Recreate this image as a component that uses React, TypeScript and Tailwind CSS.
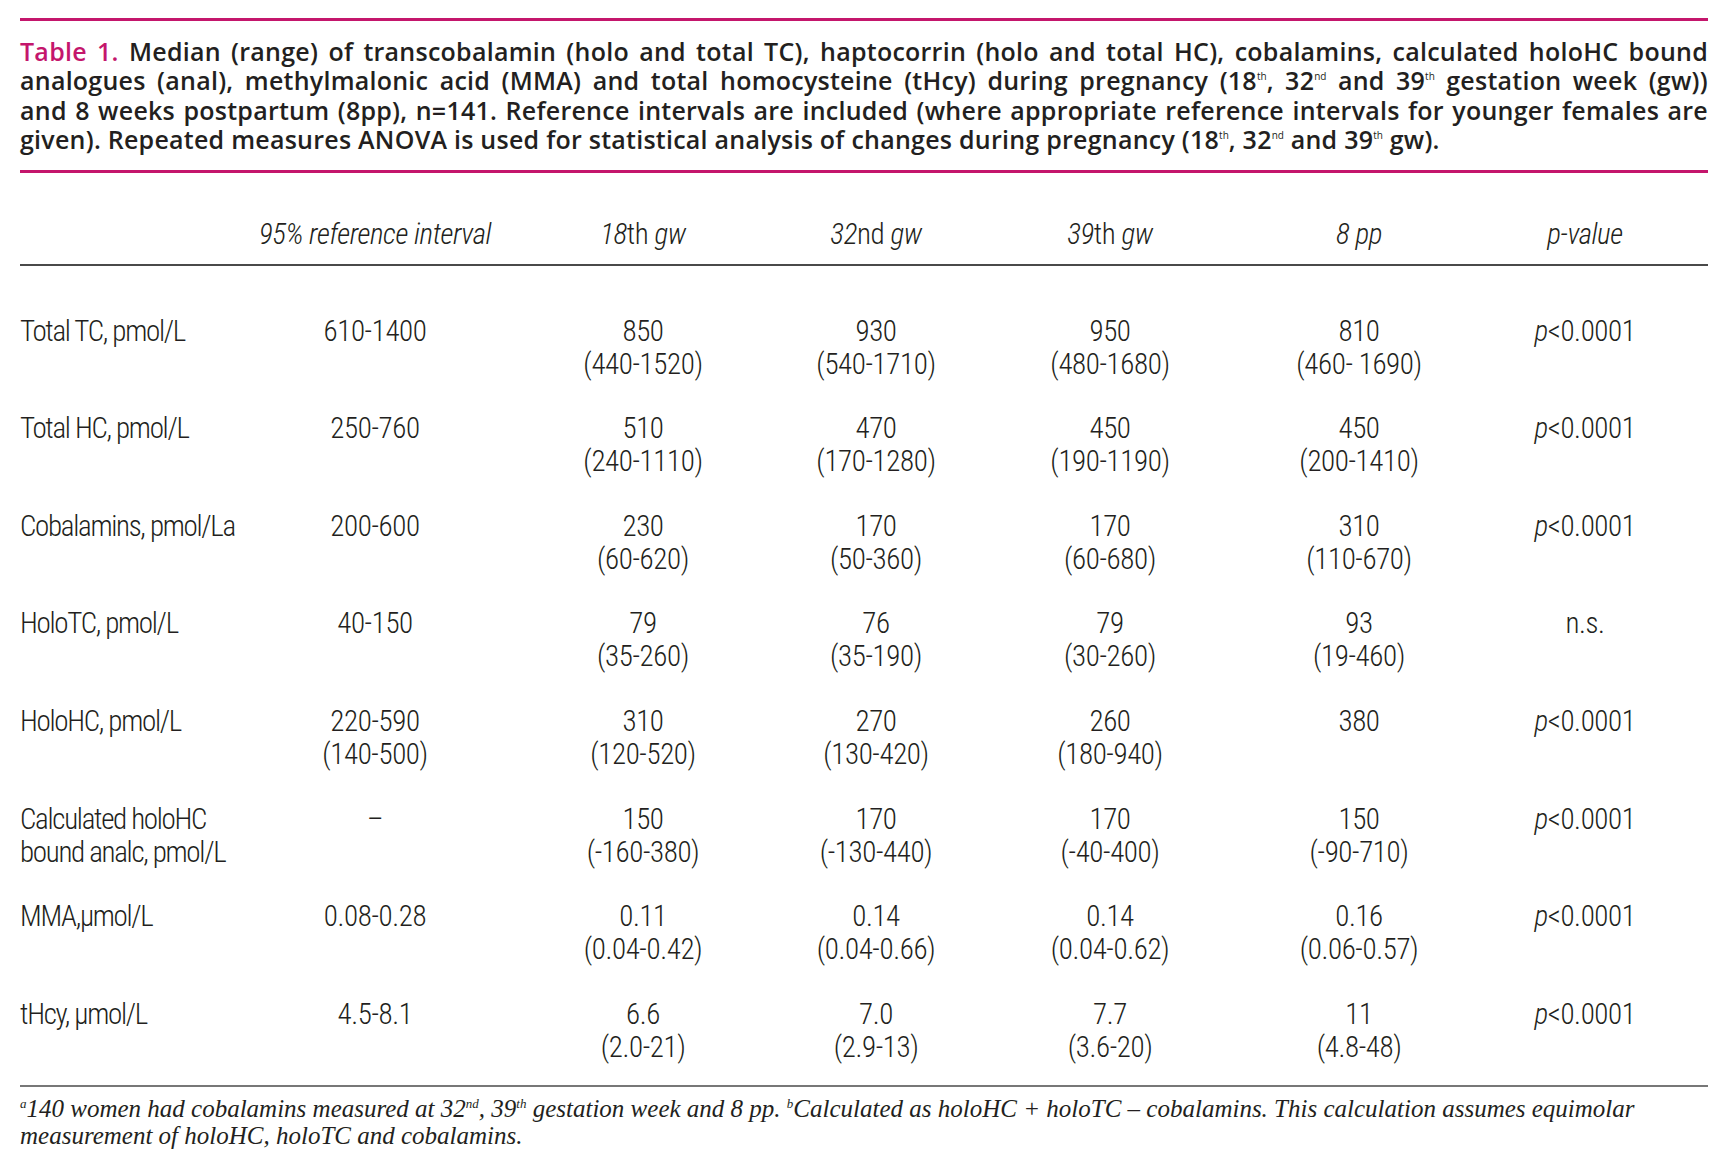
import React from "react";

const cond: React.CSSProperties = { fontFamily: 'Roboto, "Liberation Sans", sans-serif', fontStretch: "75%" };
const cap: React.CSSProperties = { fontFamily: '"Open Sans", "Liberation Sans", sans-serif' };
const serif: React.CSSProperties = { fontFamily: '"Liberation Serif", "DejaVu Serif", serif' };

type Row = { label: React.ReactNode; ref: React.ReactNode; vals: [string, string][]; p: React.ReactNode };

const P = () => (
  <span>
    <i>p</i>&lt;0.0001
  </span>
);

const rows: Row[] = [
  { label: "Total TC, pmol/L", ref: "610-1400", vals: [["850", "(440-1520)"], ["930", "(540-1710)"], ["950", "(480-1680)"], ["810", "(460- 1690)"]], p: <P /> },
  { label: "Total HC, pmol/L", ref: "250-760", vals: [["510", "(240-1110)"], ["470", "(170-1280)"], ["450", "(190-1190)"], ["450", "(200-1410)"]], p: <P /> },
  { label: "Cobalamins, pmol/La", ref: "200-600", vals: [["230", "(60-620)"], ["170", "(50-360)"], ["170", "(60-680)"], ["310", "(110-670)"]], p: <P /> },
  { label: "HoloTC, pmol/L", ref: "40-150", vals: [["79", "(35-260)"], ["76", "(35-190)"], ["79", "(30-260)"], ["93", "(19-460)"]], p: "n.s." },
  { label: "HoloHC, pmol/L", ref: <>220-590<br />(140-500)</>, vals: [["310", "(120-520)"], ["270", "(130-420)"], ["260", "(180-940)"], ["380", ""]], p: <P /> },
  { label: <>Calculated holoHC<br />bound analc, pmol/L</>, ref: "–", vals: [["150", "(-160-380)"], ["170", "(-130-440)"], ["170", "(-40-400)"], ["150", "(-90-710)"]], p: <P /> },
  { label: "MMA,\u00b5mol/L", ref: "0.08-0.28", vals: [["0.11", "(0.04-0.42)"], ["0.14", "(0.04-0.66)"], ["0.14", "(0.04-0.62)"], ["0.16", "(0.06-0.57)"]], p: <P /> },
  { label: "tHcy, \u00b5mol/L", ref: "4.5-8.1", vals: [["6.6", "(2.0-21)"], ["7.0", "(2.9-13)"], ["7.7", "(3.6-20)"], ["11", "(4.8-48)"]], p: <P /> },
];

const grid = "grid grid-cols-[221px_268px_268px_198px_270px_228px_1fr] whitespace-nowrap";

const CSup = ({ children }: { children: React.ReactNode }) => (
  <sup className="text-[10px] -top-[10px] font-normal tracking-normal">{children}</sup>
);
const FSup = ({ children }: { children: React.ReactNode }) => (
  <sup className="text-[13px] -top-[9px]">{children}</sup>
);

const split = (s: string): React.ReactNode[] => s.split(" ");

const JLine = ({ words }: { words: React.ReactNode[] }) => (
  <div className="flex justify-between gap-[5px] whitespace-nowrap">
    {words.map((w, i) => (
      <span key={i}>{w}</span>
    ))}
  </div>
);

export default function App() {
  const line1: React.ReactNode[] = [
    <span className="text-[#c4166c]">Table</span>,
    <span className="text-[#c4166c]">1.</span>,
    ...split("Median (range) of transcobalamin (holo and total TC), haptocorrin (holo and total HC), cobalamins, calculated holoHC bound"),
  ];
  const line2: React.ReactNode[] = [
    ...split("analogues (anal), methylmalonic acid (MMA) and total homocysteine (tHcy) during pregnancy"),
    <>(18<CSup>th</CSup>,</>,
    <>32<CSup>nd</CSup></>,
    "and",
    <>39<CSup>th</CSup></>,
    "gestation",
    "week",
    "(gw))",
  ];
  const line3 = split("and 8 weeks postpartum (8pp), n=141. Reference intervals are included (where appropriate reference intervals for younger females are");

  return (
    <div className="w-[1728px] h-[1168px] bg-white px-[20px] pt-[18px] text-[#231f20] overflow-hidden">
      <div className="h-[3px] bg-[#c4166c]" />
      <div className="mt-[16px] text-[25px] leading-[29.4px] font-semibold tracking-[0.25px]" style={cap}>
        <JLine words={line1} />
        <JLine words={line2} />
        <JLine words={line3} />
        <div className="whitespace-nowrap">
          given). Repeated measures ANOVA is used for statistical analysis of changes during pregnancy (18<CSup>th</CSup>, 32<CSup>nd</CSup> and 39<CSup>th</CSup> gw).
        </div>
      </div>
      <div className="mt-[15px] h-[3px] bg-[#c4166c]" />

      <div style={cond} className="text-[29px] leading-[33px] tracking-[-0.4px] font-light">
        <div className={`${grid} mt-[45px] text-center`}>
          <div />
          <div className="italic">95% reference interval</div>
          <div><i>18</i>th <i>gw</i></div>
          <div><i>32</i>nd <i>gw</i></div>
          <div><i>39</i>th <i>gw</i></div>
          <div className="italic">8 pp</div>
          <div className="italic pr-[11px]">p-value</div>
        </div>
        <div className="mt-[13px] h-[2px] bg-[#4a4a4a]" />
        <div className="pt-[49px] flex flex-col gap-[31.6px]">
          {rows.map((r, i) => (
            <div key={i} className={`${grid} h-[66px]`}>
              <div className="text-left tracking-[-1.3px]">{r.label}</div>
              <div className="text-center">{r.ref}</div>
              {r.vals.map((v, j) => (
                <div key={j} className="text-center">
                  {v[0]}
                  <br />
                  {v[1]}
                </div>
              ))}
              <div className="text-center pr-[11px]">{r.p}</div>
            </div>
          ))}
        </div>
        <div className="mt-[21px] h-[2px] bg-[#777]" />
      </div>

      <div className="mt-[8px] italic text-[25px] leading-[27px]" style={serif}>
        <div>
          <FSup>a</FSup>140 women had cobalamins measured at 32<FSup>nd</FSup>, 39<FSup>th</FSup> gestation week and 8 pp. <FSup>b</FSup>Calculated as holoHC + holoTC – cobalamins. This calculation assumes equimolar
        </div>
        <div>measurement of holoHC, holoTC and cobalamins.</div>
      </div>
    </div>
  );
}
